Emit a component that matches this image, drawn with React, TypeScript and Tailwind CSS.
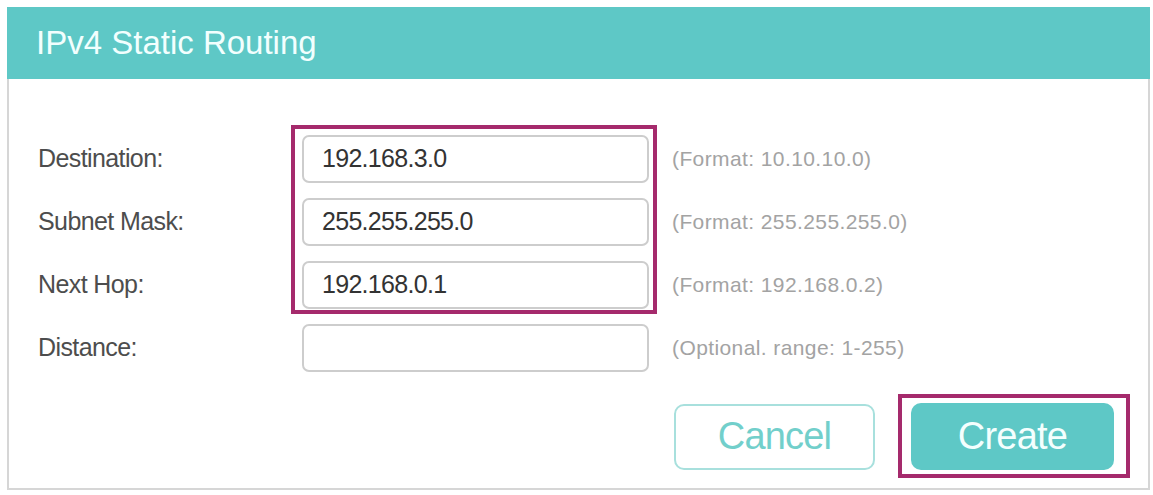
import React from "react";

const rows = [
  { label: "Destination:", value: "192.168.3.0", hint: "(Format: 10.10.10.0)" },
  { label: "Subnet Mask:", value: "255.255.255.0", hint: "(Format: 255.255.255.0)" },
  { label: "Next Hop:", value: "192.168.0.1", hint: "(Format: 192.168.0.2)" },
];

function Row({ label, value, hint }: { label: string; value: string; hint: string }) {
  return (
    <div className="flex items-center h-[48px]">
      <div className="w-[264px] text-[25px] tracking-[-0.6px] text-[#4d4d4d]">{label}</div>
      <div className="w-[347px] h-[48px] rounded-[7px] border-2 border-[#cdcdcd] bg-white flex items-center pl-[18px] text-[25px] tracking-[-0.7px] text-[#333333]">
        {value}
      </div>
      <div className="ml-[23px] text-[21px] tracking-[0.4px] text-[#a3a3a3]">{hint}</div>
    </div>
  );
}

export default function App() {
  return (
    <div className="w-[1153px] h-[495px] bg-white pt-[7px] pl-[7px]" style={{ fontFamily: '"Liberation Sans", Arial, sans-serif' }}>
      <div className="w-[1143px] h-[483px] border-2 border-t-0 border-[#d6d6d6] flex flex-col">
        <div className="h-[72px] bg-[#5ec8c6] flex items-center pl-[29px] -ml-[2px] -mr-[2px]">
          <span className="text-[33px] text-[#f2fffe]">IPv4 Static Routing</span>
        </div>
        <div className="flex flex-col pt-[56px] pl-[29px] pr-[34px]">
          <div className="flex flex-col gap-[15px]">
            <div className="relative flex flex-col gap-[15px]">
              {rows.map((r) => (
                <Row key={r.label} {...r} />
              ))}
              <div className="pointer-events-none absolute left-[253px] top-[-10px] w-[366px] h-[189px] border-[4px] border-[#a52a6c]" />
            </div>
            <div className="flex items-center h-[48px]">
              <div className="w-[264px] text-[25px] tracking-[-0.6px] text-[#4d4d4d]">Distance:</div>
              <div className="w-[347px] h-[48px] rounded-[7px] border-2 border-[#cdcdcd] bg-white" />
              <div className="ml-[23px] text-[21px] tracking-[0.4px] text-[#a3a3a3]">(Optional. range: 1-255)</div>
            </div>
          </div>
          <div className="flex justify-end items-center gap-[36px] mt-[31px]">
            <button className="w-[201px] h-[66px] rounded-[10px] border-2 border-[#a8e0dd] bg-white text-[38px] tracking-[-0.8px] text-[#72cfcb]">
              Cancel
            </button>
            <div className="relative">
              <button className="w-[203px] h-[67px] rounded-[10px] bg-[#5ec8c6] text-[38px] tracking-[-0.8px] text-[#f4fffe]">
                Create
              </button>
              <div className="pointer-events-none absolute left-[-13px] right-[-16px] top-[-9px] bottom-[-8px] border-[4px] border-[#a52a6c]" />
            </div>
          </div>
        </div>
      </div>
    </div>
  );
}
